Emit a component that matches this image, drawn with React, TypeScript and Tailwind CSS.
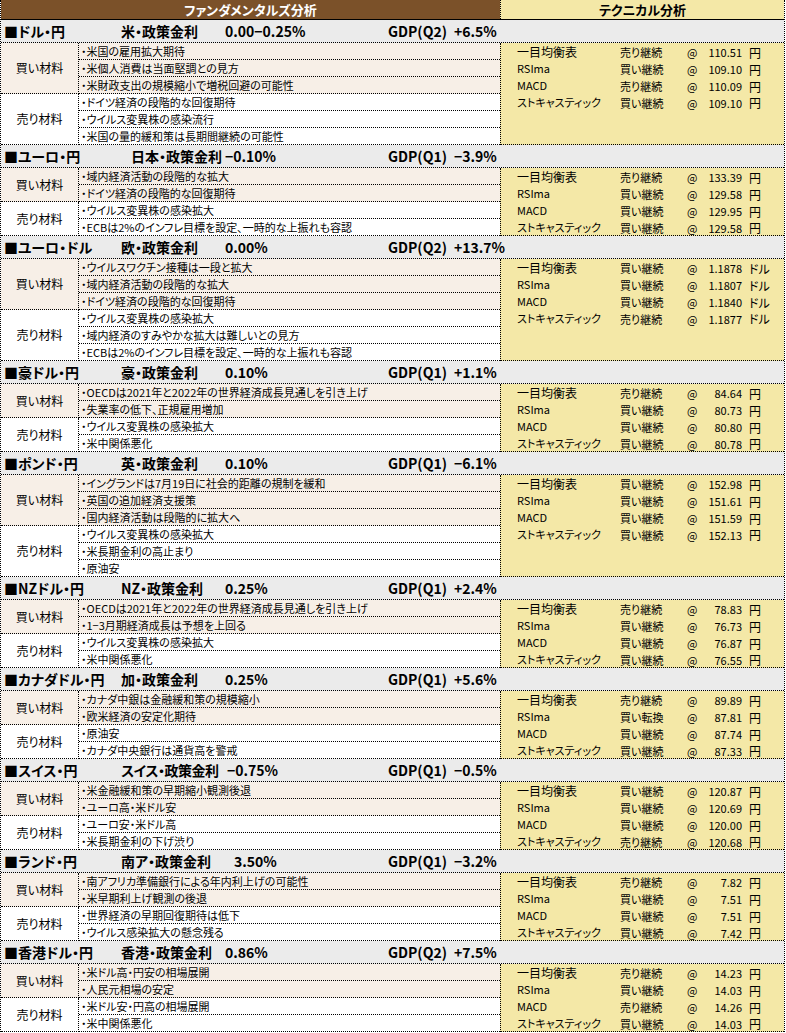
import React from 'react';

type Tech = { status: string; price: string };

interface Section {
  pair: string;
  policy: string;
  policyCls: string;
  rate: string;
  gdp: string;
  gdpValue: string;
  buy: string[];
  sell: string[];
  unit: string;
  tech: Tech[];
}

const TECH_NAMES = ['一目均衡表', 'RSIma', 'MACD', 'ストキャスティック'];

const t = (s: string, p: string): Tech => ({ status: s, price: p });

const sections: Section[] = [
  {
    pair: '■ドル・円',
    policy: '米・政策金利',
    policyCls: 'w-[104px]',
    rate: '0.00−0.25%',
    gdp: 'GDP(Q2)',
    gdpValue: '+6.5%',
    buy: ['米国の雇用拡大期待', '米個人消費は当面堅調との見方', '米財政支出の規模縮小で増税回避の可能性'],
    sell: ['ドイツ経済の段階的な回復期待', 'ウイルス変異株の感染流行', '米国の量的緩和策は長期間継続の可能性'],
    unit: '円',
    tech: [t('売り継続', '110.51'), t('買い継続', '109.10'), t('売り継続', '110.09'), t('買い継続', '109.10')],
  },
  {
    pair: '■ユーロ・円',
    policy: '日本・政策金利',
    policyCls: 'w-[104px] pl-[10px]',
    rate: '−0.10%',
    gdp: 'GDP(Q1)',
    gdpValue: '−3.9%',
    buy: ['域内経済活動の段階的な拡大', 'ドイツ経済の段階的な回復期待'],
    sell: ['ウイルス変異株の感染拡大', 'ECBは2%のインフレ目標を設定、一時的な上振れも容認'],
    unit: '円',
    tech: [t('売り継続', '133.39'), t('買い継続', '129.58'), t('買い継続', '129.95'), t('買い継続', '129.58')],
  },
  {
    pair: '■ユーロ・ドル',
    policy: '欧・政策金利',
    policyCls: 'w-[104px]',
    rate: '0.00%',
    gdp: 'GDP(Q2)',
    gdpValue: '+13.7%',
    buy: ['ウイルスワクチン接種は一段と拡大', '域内経済活動の段階的な拡大', 'ドイツ経済の段階的な回復期待'],
    sell: ['ウイルス変異株の感染拡大', '域内経済のすみやかな拡大は難しいとの見方', 'ECBは2%のインフレ目標を設定、一時的な上振れも容認'],
    unit: 'ドル',
    tech: [t('買い継続', '1.1878'), t('買い継続', '1.1807'), t('買い継続', '1.1840'), t('売り継続', '1.1877')],
  },
  {
    pair: '■豪ドル・円',
    policy: '豪・政策金利',
    policyCls: 'w-[104px]',
    rate: '0.10%',
    gdp: 'GDP(Q1)',
    gdpValue: '+1.1%',
    buy: ['OECDは2021年と2022年の世界経済成長見通しを引き上げ', '失業率の低下、正規雇用増加'],
    sell: ['ウイルス変異株の感染拡大', '米中関係悪化'],
    unit: '円',
    tech: [t('売り継続', '84.64'), t('買い継続', '80.73'), t('買い継続', '80.80'), t('買い継続', '80.78')],
  },
  {
    pair: '■ポンド・円',
    policy: '英・政策金利',
    policyCls: 'w-[104px]',
    rate: '0.10%',
    gdp: 'GDP(Q1)',
    gdpValue: '−6.1%',
    buy: ['イングランドは7月19日に社会的距離の規制を緩和', '英国の追加経済支援策', '国内経済活動は段階的に拡大へ'],
    sell: ['ウイルス変異株の感染拡大', '米長期金利の高止まり', '原油安'],
    unit: '円',
    tech: [t('買い継続', '152.98'), t('買い継続', '151.61'), t('買い継続', '151.59'), t('買い継続', '152.13')],
  },
  {
    pair: '■NZドル・円',
    policy: 'NZ・政策金利',
    policyCls: 'w-[104px]',
    rate: '0.25%',
    gdp: 'GDP(Q1)',
    gdpValue: '+2.4%',
    buy: ['OECDは2021年と2022年の世界経済成長見通しを引き上げ', '1−3月期経済成長は予想を上回る'],
    sell: ['ウイルス変異株の感染拡大', '米中関係悪化'],
    unit: '円',
    tech: [t('売り継続', '78.83'), t('買い継続', '76.73'), t('買い継続', '76.87'), t('買い継続', '76.55')],
  },
  {
    pair: '■カナダドル・円',
    policy: '加・政策金利',
    policyCls: 'w-[104px]',
    rate: '0.25%',
    gdp: 'GDP(Q1)',
    gdpValue: '+5.6%',
    buy: ['カナダ中銀は金融緩和策の規模縮小', '欧米経済の安定化期待'],
    sell: ['原油安', 'カナダ中央銀行は通貨高を警戒'],
    unit: '円',
    tech: [t('売り継続', '89.89'), t('買い転換', '87.81'), t('買い継続', '87.74'), t('買い継続', '87.33')],
  },
  {
    pair: '■スイス・円',
    policy: 'スイス・政策金利',
    policyCls: 'w-[106px] tracking-[-0.5px]',
    rate: '−0.75%',
    gdp: 'GDP(Q1)',
    gdpValue: '−0.5%',
    buy: ['米金融緩和策の早期縮小観測後退', 'ユーロ高・米ドル安'],
    sell: ['ユーロ安・米ドル高', '米長期金利の下げ渋り'],
    unit: '円',
    tech: [t('買い継続', '120.87'), t('買い継続', '120.69'), t('買い継続', '120.00'), t('売り継続', '120.68')],
  },
  {
    pair: '■ランド・円',
    policy: '南ア・政策金利',
    policyCls: 'w-[113px]',
    rate: '3.50%',
    gdp: 'GDP(Q1)',
    gdpValue: '−3.2%',
    buy: ['南アフリカ準備銀行による年内利上げの可能性', '米早期利上げ観測の後退'],
    sell: ['世界経済の早期回復期待は低下', 'ウイルス感染拡大の懸念残る'],
    unit: '円',
    tech: [t('売り継続', '7.82'), t('買い継続', '7.51'), t('買い継続', '7.51'), t('買い継続', '7.42')],
  },
  {
    pair: '■香港ドル・円',
    policy: '香港・政策金利',
    policyCls: 'w-[104px]',
    rate: '0.86%',
    gdp: 'GDP(Q2)',
    gdpValue: '+7.5%',
    buy: ['米ドル高・円安の相場展開', '人民元相場の安定'],
    sell: ['米ドル安・円高の相場展開', '米中関係悪化'],
    unit: '円',
    tech: [t('売り継続', '14.23'), t('買い継続', '14.03'), t('売り継続', '14.26'), t('買い継続', '14.03')],
  },
];

function TitleRow({ s }: { s: Section }) {
  return (
    <div className="flex h-[23px] items-center whitespace-nowrap border-b border-dotted border-black bg-[#ebebeb] pl-[3px] text-[14px] font-bold text-black">
      <span className="w-[117px]">{s.pair}</span>
      <span className={s.policyCls}>{s.policy}</span>
      <span className="flex-1">{s.rate}</span>
      <span className="w-[66px]">{s.gdp}</span>
      <span className="w-[330px]">{s.gdpValue}</span>
    </div>
  );
}

function Label({ text, rows, buy }: { text: string; rows: number; buy: boolean }) {
  return (
    <div
      className={`flex items-center justify-center border-b border-r border-dotted border-black text-[12px] ${buy ? 'bg-[#f7efe7]' : 'bg-white'}`}
      style={{ height: rows * 17 }}
    >
      {text}
    </div>
  );
}

function ItemRow({ text, buy }: { text: string; buy: boolean }) {
  return (
    <div
      className={`h-[17px] truncate border-b border-dotted border-black pl-[2px] text-[11px] leading-[16px] ${buy ? 'bg-[#f7efe7]' : 'bg-white'}`}
    >
      ・{text}
    </div>
  );
}

function TechPanel({ s }: { s: Section }) {
  return (
    <div className="border-b border-l border-dotted border-black bg-[#f4e8a7] text-[11px]">
      {s.tech.map((row, i) => (
        <div
          key={i}
          className={`flex items-center whitespace-nowrap pl-[16px] ${i === 3 ? 'h-[16px]' : 'h-[17px]'}`}
        >
          <span className={`w-[103px] ${i === 0 ? 'text-[12px]' : ''}`}>{TECH_NAMES[i]}</span>
          <span className="w-[67px] pt-[2px]">{row.status}</span>
          <span className="w-[12px] pt-[2px]">@</span>
          <span className="w-[43px] pt-[2px] text-right">{row.price}</span>
          <span className="ml-[7px] pt-[2px] text-[12px]">{s.unit}</span>
        </div>
      ))}
    </div>
  );
}

function SectionBlock({ s }: { s: Section }) {
  return (
    <div>
      <TitleRow s={s} />
      <div className="grid grid-cols-[78px_421px_1fr]">
        <div className="flex flex-col">
          <Label text="買い材料" rows={s.buy.length} buy />
          <Label text="売り材料" rows={s.sell.length} buy={false} />
        </div>
        <div className="flex flex-col">
          {s.buy.map((b, i) => (
            <ItemRow key={'b' + i} text={b} buy />
          ))}
          {s.sell.map((b, i) => (
            <ItemRow key={'s' + i} text={b} buy={false} />
          ))}
        </div>
        <TechPanel s={s} />
      </div>
    </div>
  );
}

export default function App() {
  return (
    <div className="min-h-[1033px] w-[786px] bg-white font-['Noto_Sans_CJK_JP',sans-serif] text-black [font-feature-settings:'palt']">
      <div className="w-[785px] border-l border-r border-dotted border-black bg-white">
        <div className="flex h-[20px] border-b border-black text-[13px] font-bold">
          <div className="flex w-[499px] items-center justify-center bg-[#7b5129] text-white">ファンダメンタルズ分析</div>
          <div className="flex flex-1 items-center justify-center border-l border-dotted border-black bg-[#f4e8a7]">テクニカル分析</div>
        </div>
        {sections.map((s, i) => (
          <SectionBlock key={i} s={s} />
        ))}
      </div>
    </div>
  );
}
